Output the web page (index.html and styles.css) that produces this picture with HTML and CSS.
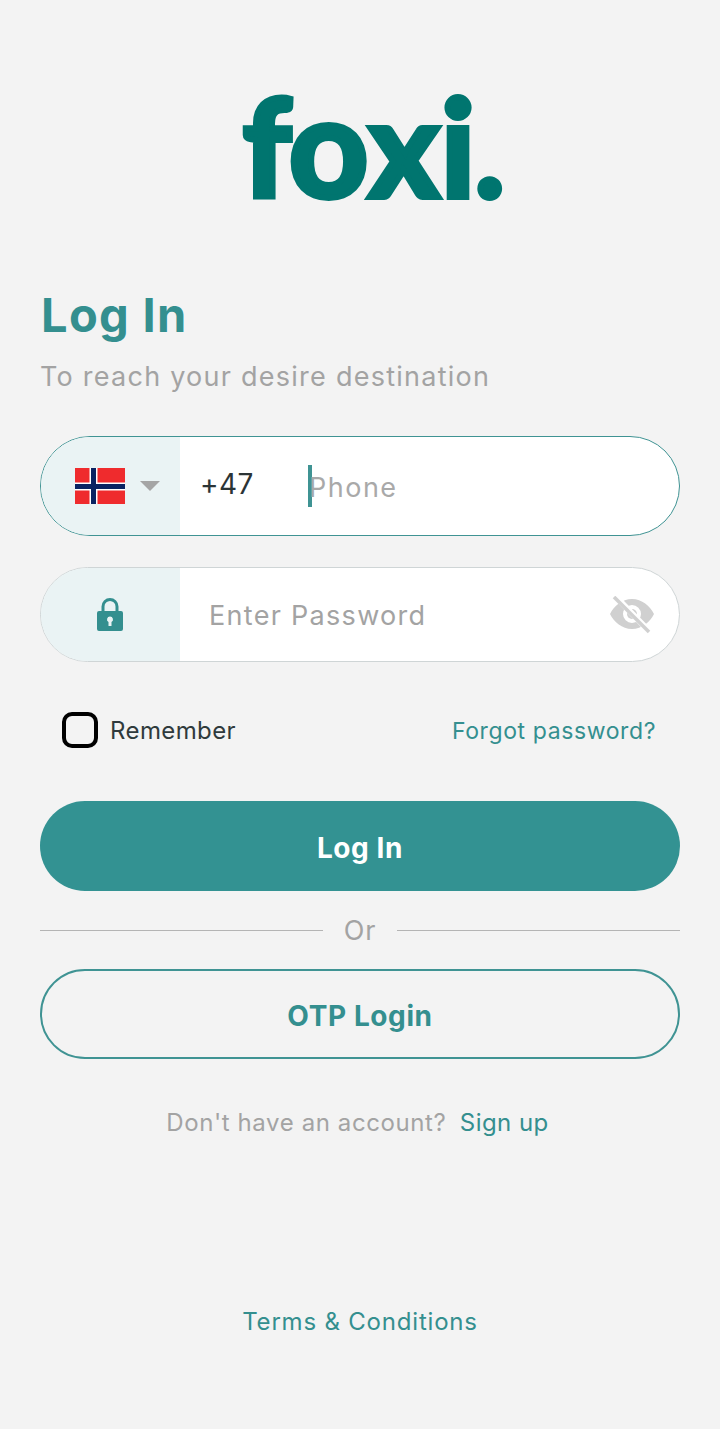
FILE: index.html
```html
<!DOCTYPE html>
<html lang="en">
<head>
<meta charset="utf-8">
<title>foxi. Log In</title>
<link rel="stylesheet" href="styles.css">
</head>
<body>
<main class="page">
  <div class="logo"><span class="l-f">f</span><span class="l-o">o</span><span class="l-x">x</span><span class="l-i">i</span><span class="l-dot">.</span></div>
  <h1 class="title">Log In</h1>
  <p class="subtitle">To reach your desire destination</p>

  <div class="field field-phone">
    <div class="field-lead lead-phone">
      <svg class="flag" viewBox="0 0 50 36" aria-hidden="true">
        <rect width="50" height="36" fill="#ef2b2d"/>
        <rect x="14.5" width="8" height="36" fill="#fff"/>
        <rect y="14.5" width="50" height="8" fill="#fff"/>
        <rect x="16" width="5" height="36" fill="#0a2362"/>
        <rect y="16" width="50" height="5" fill="#0a2362"/>
      </svg>
      <span class="caret-down"></span>
    </div>
    <span class="dial">+47</span>
    <span class="cursor"></span>
    <span class="placeholder phone-ph">Phone</span>
  </div>

  <div class="field field-pass">
    <div class="field-lead lead-pass">
      <svg class="lock" viewBox="0 0 28 34" aria-hidden="true">
        <path d="M7 15V8.500a7 7 0 0 1 14 0V15" fill="none" stroke="#348f8f" stroke-width="3"/>
        <path fill="#348f8f" fill-rule="evenodd" d="M3 13h22a2 2 0 0 1 2 2v16a2 2 0 0 1-2 2H3a2 2 0 0 1-2-2V15a2 2 0 0 1 2-2zm11 5.500a3 3 0 0 0-1.500 5.600V28h3v-3.900A3 3 0 0 0 14 18.500z"/>
      </svg>
    </div>
    <span class="placeholder pass-ph">Enter Password</span>
    <svg class="eye" viewBox="0 0 44 38" aria-hidden="true">
      <path fill="#d0d0d0" fill-rule="evenodd" d="M22 3C12 3 4 10 0 18c4 8 12 15 22 15s18-7 22-15C40 10 32 3 22 3zm0 6a9 9 0 1 1 0 18 9 9 0 0 1 0-18z"/>
      <circle cx="22" cy="18" r="5" fill="#d0d0d0"/>
      <path d="M5 0l36 37" stroke="#fff" stroke-width="6"/>
      <path d="M4 1l35 35" stroke="#d0d0d0" stroke-width="3.600"/>
    </svg>
  </div>

  <div class="options">
    <label class="remember"><span class="checkbox"></span><span>Remember</span></label>
    <a class="link forgot">Forgot password?</a>
  </div>

  <button class="btn btn-primary">Log In</button>
  <div class="divider"><span class="rule"></span><span class="or">Or</span><span class="rule"></span></div>
  <button class="btn btn-outline">OTP Login</button>

  <p class="signup">Don't have an account? <a class="link signup-link">Sign up</a></p>
  <a class="link terms">Terms &amp; Conditions</a>
</main>
</body>
</html>
```
FILE: styles.css
```css
* { box-sizing: border-box; }
html, body { margin: 0; padding: 0; }
body { background: #f3f3f3; font-family: Inter, "Liberation Sans", sans-serif; height: 1429px; overflow: hidden; }
.page { display: flex; flex-direction: column; padding: 0 40px; }
.logo {
  height: 130px; margin-top: 79px; margin-bottom: 1px; padding-left: 201px;
  display: flex; align-items: baseline; color: #00756f;
  font-family: Lato, sans-serif; font-weight: 700; font-size: 134px; line-height: 130px;
  -webkit-text-stroke: 6px #00756f;
}
.l-f { width: 46px; margin-left: 2px; }
.l-o { width: 80px; font-size: 138px; }
.l-x { width: 72px; font-size: 134px; }
.l-i { width: 34px; }
.l-dot { font-size: 124px; }
.title { margin: 75px 0 0 1px; font-size: 47px; line-height: 60px; font-weight: 700; color: #348f8f; letter-spacing: 1.3px; }
.subtitle { margin: 13px 0 0; font-size: 27px; line-height: 38px; color: #a3a3a3; letter-spacing: 1.25px; }
.field { display: flex; align-items: center; background: #fff; border-radius: 50px; overflow: hidden; position: relative; border: 1px solid; }
.field-phone { height: 100px; margin-top: 40px; border-color: #3f9393; }
.field-pass { height: 95px; margin-top: 31px; border-color: #cfd5d6; }
.field-lead { width: 139px; align-self: stretch; flex: none; background: #eaf3f4; display: flex; align-items: center; justify-content: center; }
.lead-phone { justify-content: flex-start; padding-left: 34px; }
.lead-pass { padding-right: 2px; }
.flag { width: 50px; height: 36px; display: block; }
.caret-down { margin-left: 15px; border-left: 10px solid transparent; border-right: 10px solid transparent; border-top: 10px solid #a5a5a5; }
.dial { margin-left: 20px; width: 108px; font-size: 28px; letter-spacing: .4px; color: #2b3436; position: relative; top: -2px; }
.cursor { width: 4px; height: 42px; background: #3f9393; flex: none; }
.placeholder { font-size: 27px; color: #a9a9a9; letter-spacing: 1.5px; position: relative; top: 1px; }
.phone-ph { margin-left: -3px; }
.pass-ph { margin-left: 29px; color: #a3a3a3; letter-spacing: 1.3px; }
.lock { width: 28px; height: 34px; display: block; }
.eye { width: 44px; height: 38px; position: absolute; right: 25px; top: 28px; }
.options { display: flex; align-items: center; justify-content: space-between; margin-top: 49px; padding: 0 24px 0 22px; height: 38px; }
.remember { display: flex; align-items: center; gap: 12px; font-size: 24px; color: #2f3a3c; letter-spacing: .4px; }
.checkbox { width: 36px; height: 36px; border: 4px solid #000; border-radius: 10px; }
.link { color: #348f8f; letter-spacing: .8px; }
.forgot { font-size: 23px; letter-spacing: .6px; padding-top: 2px; }
.btn { width: 100%; height: 90px; padding-top: 4px; border-radius: 45px; font-family: inherit; font-size: 28px; font-weight: 700; letter-spacing: .6px; }
.btn-primary { margin-top: 52px; background: #339292; color: #fff; border: 0; }
.divider { display: flex; align-items: center; gap: 21px; height: 78px; }
.rule { flex: 1; height: 1px; background: #b4b4b4; }
.or { font-size: 27px; color: #a3a3a3; letter-spacing: .8px; }
.btn-outline { background: transparent; color: #348f8f; border: 2px solid #3f9393; }
.signup { margin: 46px 0 0; padding-right: 5px; text-align: center; font-size: 24px; line-height: 36px; color: #a3a3a3; letter-spacing: .6px; }
.signup-link { margin-left: 6px; letter-spacing: .45px; }
.terms { margin-top: 163px; text-align: center; font-size: 24px; line-height: 36px; }
```
